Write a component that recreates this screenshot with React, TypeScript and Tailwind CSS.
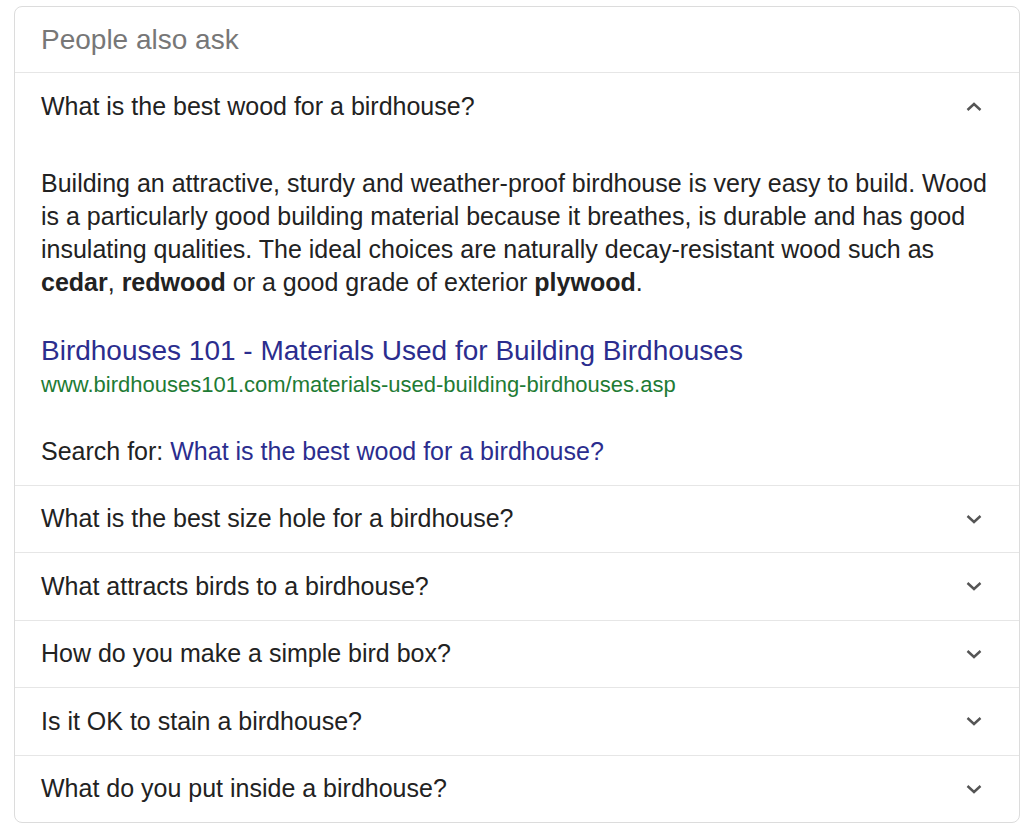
import React from 'react'

const questions = [
  'What is the best size hole for a birdhouse?',
  'What attracts birds to a birdhouse?',
  'How do you make a simple bird box?',
  'Is it OK to stain a birdhouse?',
  'What do you put inside a birdhouse?',
]

const Chevron = ({ up = false }: { up?: boolean }) => (
  <svg width="18" height="12" viewBox="0 0 18 12" className="text-[#555]">
    <path
      d={up ? 'M2.5 9 L9 3 L15.5 9' : 'M2.5 3 L9 9 L15.5 3'}
      fill="none"
      stroke="currentColor"
      strokeWidth="2.4"
    />
  </svg>
)

const QuestionRow = ({ text }: { text: string }) => (
  <div className="flex h-[67.5px] items-center justify-between border-t border-[#e6e6e6] pl-[26px] pr-[36px]">
    <span className="text-[25px] text-[#222]">{text}</span>
    <Chevron />
  </div>
)

export default function App() {
  return (
    <div className="min-h-screen bg-white pt-[6px] pl-[14px] [font-family:'Liberation_Sans',Arial,sans-serif]">
      <div className="w-[1006px] overflow-hidden rounded-[8px] border border-[#dcdcdc] bg-white">
        <div className="flex h-[65px] items-center pl-[26px] text-[28px] text-[#777]">
          People also ask
        </div>

        <div className="flex h-[68px] items-center justify-between border-t border-[#e6e6e6] pl-[26px] pr-[36px]">
          <span className="text-[25px] text-[#222]">What is the best wood for a birdhouse?</span>
          <Chevron up />
        </div>

        <div className="pl-[26px] pr-[8px] pt-[26.5px] pb-[17px]">
          <p className="text-[25px] leading-[33px] text-[#222]">
            Building an attractive, sturdy and weather-proof birdhouse is very easy to build. Wood
            is a particularly good building material because it breathes, is durable and has good
            insulating qualities. The ideal choices are naturally decay-resistant wood such as{' '}
            <b>cedar</b>, <b>redwood</b> or a good grade of exterior <b>plywood</b>.
          </p>
          <div className="mt-[35.5px] text-[28px] leading-[34px] text-[#2b2d8e]">
            Birdhouses 101 - Materials Used for Building Birdhouses
          </div>
          <div className="text-[22px] leading-[34px] text-[#1e7b34]">
            www.birdhouses101.com/materials-used-building-birdhouses.asp
          </div>
          <div className="mt-[32.5px] text-[25px] leading-[33px] text-[#222]">
            Search for: <span className="text-[#2b2d8e]">What is the best wood for a birdhouse?</span>
          </div>
        </div>

        {questions.map((q) => (
          <QuestionRow key={q} text={q} />
        ))}
      </div>
    </div>
  )
}
